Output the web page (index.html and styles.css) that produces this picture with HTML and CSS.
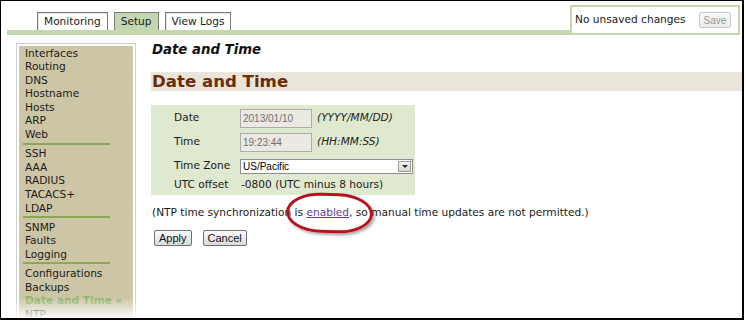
FILE: index.html
```html
<!DOCTYPE html>
<html lang="en">
<head>
<meta charset="utf-8">
<title>Setup - Date and Time</title>
<link rel="stylesheet" href="styles.css">
</head>
<body>
<div class="frame">
  <div class="header">
    <ul class="tabs">
      <li class="tab">Monitoring</li>
      <li class="tab current">Setup</li>
      <li class="tab">View Logs</li>
    </ul>
    <div class="status">
      <span class="status-text">No unsaved changes</span>
      <button class="save" disabled>Save</button>
    </div>
  </div>

  <div class="body">
    <div class="sidebar">
      <ul class="menu">
        <li>Interfaces</li>
        <li>Routing</li>
        <li>DNS</li>
        <li>Hostname</li>
        <li>Hosts</li>
        <li>ARP</li>
        <li>Web</li>
        <li class="sep"></li>
        <li>SSH</li>
        <li>AAA</li>
        <li>RADIUS</li>
        <li>TACACS+</li>
        <li>LDAP</li>
        <li class="sep"></li>
        <li>SNMP</li>
        <li>Faults</li>
        <li>Logging</li>
        <li class="sep"></li>
        <li>Configurations</li>
        <li>Backups</li>
        <li class="active">Date and Time &laquo;</li>
        <li>NTP</li>
      </ul>
    </div>

    <div class="main">
      <h1 class="crumb">Date and Time</h1>
      <h2 class="heading">Date and Time</h2>
      <div class="panel">
        <div class="row">
          <label class="lbl">Date</label>
          <input class="field" type="text" value="2013/01/10" disabled>
          <em class="hint">(YYYY/MM/DD)</em>
        </div>
        <div class="row">
          <label class="lbl">Time</label>
          <input class="field" type="text" value="19:23:44" disabled>
          <em class="hint">(HH:MM:SS)</em>
        </div>
        <div class="row">
          <label class="lbl">Time Zone</label>
          <div class="tz">
            <select class="tz-select"><option>US/Pacific</option></select>
            <span class="tz-drop"><span class="tz-arrow"></span></span>
          </div>
        </div>
        <div class="row row-utc">
          <label class="lbl">UTC offset</label>
          <span class="utc">-0800 (UTC minus 8 hours)</span>
        </div>
      </div>
      <p class="note">(NTP time synchronization is <a href="#">enabled</a>, so manual time updates are not permitted.)</p>
      <div class="buttons">
        <button class="btn">Apply</button>
        <button class="btn">Cancel</button>
      </div>
    </div>
  </div>

  <div class="fade"></div>
  <div class="callout"></div>
</div>
</body>
</html>
```

FILE: styles.css
```css
* {
	box-sizing: border-box;
}
body {
	margin: 0;
	background: #fff;
	font: 10.6px/13.6px "DejaVu Sans", Verdana, sans-serif;
	color: #1a1a1a;
}
.frame {
	position: relative;
	width: 744px;
	height: 320px;
	overflow: hidden;
	border: 1px solid #000;
	border-right-width: 2px;
	border-bottom-width: 2px;
}

/* top bar */
.header {
	display: flex;
	align-items: flex-end;
	height: 30px;
	margin: 4px 2px 0 6px;
}
.tabs {
	flex: 1;
	display: flex;
	align-items: flex-end;
	gap: 6px;
	height: 30px;
	margin: 0;
	padding: 0 0 0 30px;
	list-style: none;
	border-bottom: 5px solid #c4d8b0;
}
.tab {
	height: 18px;
	padding: 2px 6px 0;
	border: 1px solid #7a7a7a;
	border-bottom: none;
	box-shadow: inset 1px 1px 0 #e4e4e4;
	background: #fff;
}
.tab.current { background: #c4d8b0; box-shadow: none; }
.status {
	display: flex;
	align-items: center;
	width: 170px;
	height: 30px;
	padding: 0 7px 0 3px;
	border: 2px solid #c4d8b0;
	background: #fff;
}
.status-text { flex: 1; }
.save {
	width: 32px;
	height: 16px;
	padding: 0;
	font: 10px "Liberation Sans", Arial, sans-serif;
	color: #999;
	background: linear-gradient(#fafafa, #ececec);
	border: 1px solid #c8c8c8;
	border-radius: 2px;
}

/* left menu */
.body {
	display: flex;
	margin-top: 8px;
}
.sidebar {
	width: 120px;
	margin-left: 15px;
	padding: 2px;
	border: 1px solid #cfcfcf;
	background: #fff;
}
.menu {
	margin: 0;
	padding: 0.5px 0 0 6px;
	list-style: none;
	background: #cdc6a6;
}
.menu li { height: 13.6px; white-space: nowrap; }
.menu li.sep {
	width: 87px;
	height: 2px;
	margin: 1px 0 2.5px -2px;
	background: #89a955;
}
.menu li.active { color: #8db46b; font-weight: bold; }

/* content */
.main {
	flex: 1;
	margin-left: 15px;
}
.crumb {
	margin: 0;
	padding-left: 1px;
	font-size: 13.3px;
	line-height: 14px;
	font-style: italic;
	color: #111;
}
.heading {
	margin: 15px 0 0;
	height: 19px;
	padding-left: 1px;
	font-size: 16.6px;
	line-height: 19px;
	color: #6a2d08;
	background: #e9e5da;
}
.panel {
	width: 264px;
	margin-top: 14px;
	padding: 1px 2px 3px 23px;
	background: #dfe9cf;
}
.row {
	display: flex;
	align-items: center;
	height: 24px;
}
.row-utc { height: 14px; }
.lbl { width: 66px; }
.field {
	width: 72px;
	height: 19px;
	margin: 0 5px 0 0;
	padding: 0 2px;
	font: 10px "Liberation Sans", Arial, sans-serif;
	color: #707070;
	background: #ebe9e2;
	border: 1px solid #acacac;
}
.hint { color: #222; }
.tz {
	display: flex;
	align-items: center;
	width: 173px;
	height: 15px;
	border: 1px solid #8e8e8e;
	background: #fff;
}
.tz-select {
	flex: 1;
	height: 13px;
	padding: 0 0 0 2px;
	border: none;
	background: transparent;
	appearance: none;
	-webkit-appearance: none;
	font: 10px "Liberation Sans", Arial, sans-serif;
	color: #000;
}
.tz-drop {
	display: flex;
	align-items: center;
	justify-content: center;
	width: 13px;
	height: 11px;
	margin-right: 1px;
	border: 1px solid #9a9a9a;
	background: linear-gradient(#f4f4f4, #d8d8d8);
}
.tz-arrow {
	width: 0;
	height: 0;
	border-left: 3px solid transparent;
	border-right: 3px solid transparent;
	border-top: 3px solid #222;
}
.utc { padding-left: 1px; }
.note {
	margin: 11px 0 0;
	padding-left: 1px;
}
.note a { color: #6a3b9e; }
.buttons {
	display: flex;
	gap: 11px;
	margin-top: 10px;
	padding-left: 3px;
}
.btn {
	height: 16px;
	padding: 0 4px;
	font: 11px "Liberation Sans", Arial, sans-serif;
	color: #111;
	background: linear-gradient(#fbfbfb, #dadada);
	border: 1px solid #707070;
	border-radius: 2px;
}

/* overlays */
.fade {
	position: absolute;
	left: 0;
	right: 0;
	bottom: 0;
	height: 20px;
	background: linear-gradient(rgba(255,255,255,0), rgba(255,255,255,.92));
}
.callout {
	position: absolute;
	left: 285px;
	top: 192px;
	width: 87px;
	height: 40px;
	border: 3px solid #b8121c;
	border-radius: 40% / 50%;
	transform: rotate(2deg);
	box-shadow: 2px 2px 3px rgba(0,0,0,.35);
}
```
